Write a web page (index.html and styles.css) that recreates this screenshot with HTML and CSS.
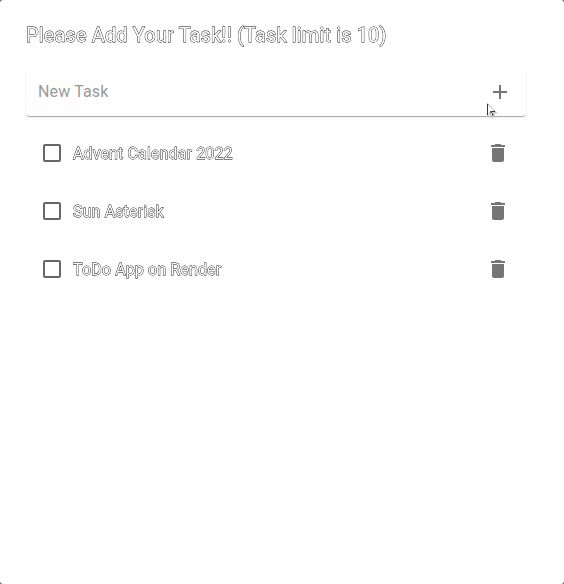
FILE: index.html
```html
<!DOCTYPE html>
<html lang="en">
<head>
<meta charset="utf-8">
<title>Tasks</title>
<link rel="stylesheet" href="styles.css">
</head>
<body>
<main class="window">
  <h1 class="title"><span>Please Add Your Task!! (Task limit is 10)</span></h1>
  <form class="entry">
    <span class="placeholder">New Task</span>
    <svg class="icon" viewBox="0 0 24 24"><path d="M19 13h-6v6h-2v-6H5v-2h6V5h2v6h6v2z"/></svg>
    <svg class="cursor" viewBox="0 0 12 18"><path d="M1.500 1.500v12l2.500-2 2 4 2.500-1-1.500-3.500h3.500z" fill="#fff" stroke="#999" stroke-width=".8"/><path d="M1.500 2v11M4 11l1-2 1 2 1 3M6 9.500h3" fill="none" stroke="#333"/></svg>
  </form>
  <ul class="list">
    <li class="task"><span class="box"></span><span class="label">Advent Calendar 2022</span><svg class="icon" viewBox="0 0 24 24"><path d="M6 19c0 1.100.9 2 2 2h8c1.100 0 2-.9 2-2V7H6v12zM19 4h-3.500l-1-1h-5l-1 1H5v2h14V4z"/></svg></li>
    <li class="task"><span class="box"></span><span class="label">Sun Asterisk</span><svg class="icon" viewBox="0 0 24 24"><path d="M6 19c0 1.100.9 2 2 2h8c1.100 0 2-.9 2-2V7H6v12zM19 4h-3.500l-1-1h-5l-1 1H5v2h14V4z"/></svg></li>
    <li class="task"><span class="box"></span><span class="label">ToDo App on Render</span><svg class="icon" viewBox="0 0 24 24"><path d="M6 19c0 1.100.9 2 2 2h8c1.100 0 2-.9 2-2V7H6v12zM19 4h-3.500l-1-1h-5l-1 1H5v2h14V4z"/></svg></li>
  </ul>
</main>
</body>
</html>
```
FILE: styles.css
```css
* { box-sizing: border-box; }
html { background: #555; }
body { margin: 0; font-family: Roboto, "Liberation Sans", sans-serif; }
.window {
  height: 584px;
  padding: 19px 38px 0 26px;
  border-radius: 3px;
  background: #fefefe;
}
.title {
  margin: 0;
  font-size: 20px;
  font-weight: 400;
  line-height: 32px;
  letter-spacing: .13px;
  color: #fefefe;
  -webkit-text-stroke: .8px #000;
  paint-order: stroke fill;
  filter: grayscale(1);
}
.entry {
  position: relative;
  display: flex;
  align-items: center;
  justify-content: space-between;
  height: 48px;
  margin-top: 17px;
  padding: 0 14px 0 12px;
  border-radius: 0 0 4px 4px;
  background: #fefefe;
  box-shadow: 0 2px 1px -1px rgba(0,0,0,.2), 0 1px 1px rgba(0,0,0,.14), 0 1px 2px rgba(0,0,0,.08);
  clip-path: inset(3px -4px -4px -4px);
}
.placeholder { margin-top: -2px; font-size: 16px; letter-spacing: .15px; color: #999; }
.icon { width: 24px; height: 24px; fill: #757575; flex: none; }
.cursor { position: absolute; left: 460px; top: 34px; width: 12px; height: 18px; }
.list { margin: 8px 0 0; padding: 0; list-style: none; }
.task { display: flex; align-items: center; height: 58px; padding: 0 16px 0 17px; }
.box { width: 18px; height: 18px; border: 2px solid #666; border-radius: 2px; }
.label {
  flex: 1;
  margin-left: 12px;
  font-size: 16px;
  letter-spacing: .13px;
  color: #fefefe;
  -webkit-text-stroke: .8px #000;
  paint-order: stroke fill;
  filter: grayscale(1);
}
```
